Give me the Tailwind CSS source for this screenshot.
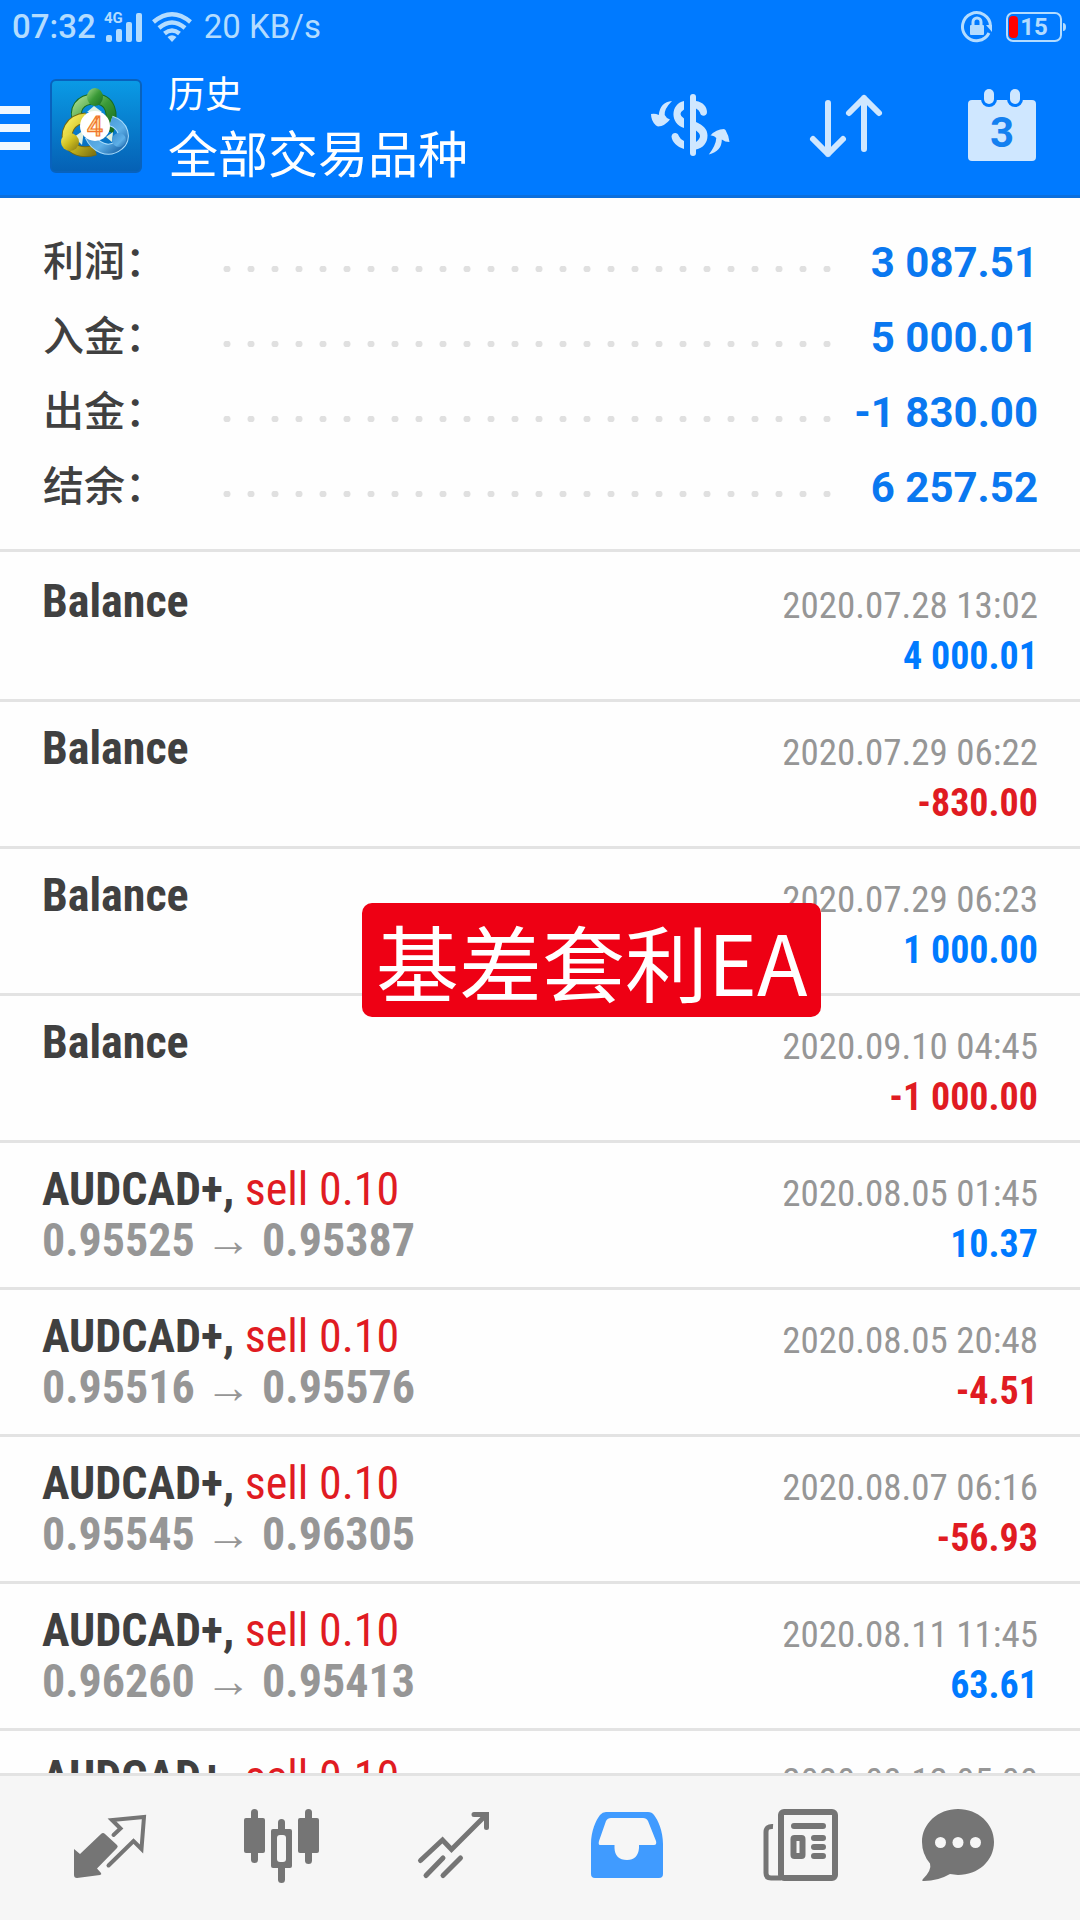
<!DOCTYPE html>
<html lang="zh-CN">
  <head>
    <meta charset="UTF-8">
    <meta name="viewport" content="width=device-width, initial-scale=1.0">
    <title>历史 - 全部交易品种</title>
    <script src="https://cdn.jsdelivr.net/npm/@tailwindcss/browser@4"></script>
  </head>

  <body class="relative h-screen flex flex-col overflow-hidden bg-[#fefefe] text-[#404040] font-['Roboto','Noto_Sans_CJK_SC',sans-serif]">

    <!-- status bar -->
    <div class="h-[53px] shrink-0 bg-[#007aff] text-[#b3dcff] flex items-center pl-3 pr-[14px] pt-1 pb-1 text-[33px] leading-10">
      <span class="font-medium">07:32</span>
      <svg class="ml-2 w-10 h-8" viewBox="0 0 40 32" fill="currentColor" aria-label="4G">
        <text x="0" y="12" font-family="Roboto, sans-serif" font-size="15" font-weight="700">4G</text>
        <rect x="2" y="24" width="6" height="7" rx="2"/>
        <rect x="12" y="18" width="6" height="13" rx="2"/>
        <rect x="22" y="11" width="6" height="20" rx="2"/>
        <rect x="32" y="2" width="6" height="29" rx="2"/>
      </svg>
      <svg class="ml-2 w-10 h-8" viewBox="0 0 40 32" fill="none" stroke="currentColor" stroke-width="4.500" aria-label="Wi-Fi">
        <path d="M1.500 11 Q20 -4.500 38.500 11"/>
        <path d="M7 17 Q20 6 33 17"/>
        <path d="M12.500 22.500 Q20 16.500 27.500 22.500"/>
        <path d="M15.500 26 Q20 22.500 24.500 26 L20 31Z" fill="currentColor" stroke="none"/>
      </svg>
      <span class="ml-3">20 KB/s</span>
      <svg class="ml-auto w-8 h-8" viewBox="0 0 32 32" fill="none" stroke="currentColor" stroke-width="3" aria-label="Rotation lock">
        <path d="M29.500 15 A14 14 0 1 0 28 22"/>
        <path d="M25 14 L31 14 L31 21Z" fill="currentColor" stroke="none"/>
        <rect x="9" y="14" width="14" height="10" rx="1" fill="currentColor" stroke="none"/>
        <path d="M12 15 V11 a4 4 0 0 1 8 0 V15"/>
      </svg>
      <svg class="ml-3 w-[61px] h-8" viewBox="0 0 61 32" fill="none" aria-label="15%">
        <rect x="2" y="2" width="54" height="28" rx="6" stroke="currentColor" stroke-width="2"/>
        <rect x="4" y="5" width="9" height="22" rx="4" fill="#f00"/>
        <path d="M58 12 Q61 12 61 16 Q61 20 58 20Z" fill="currentColor"/>
        <text x="29" y="24" text-anchor="middle" font-family="Roboto, sans-serif" font-size="24" font-weight="700" fill="currentColor">15</text>
      </svg>
    </div>

    <!-- app bar -->
    <header class="h-[145px] shrink-0 bg-[#007aff] border-b-3 border-[#0b6fdd] flex items-center text-white">
      <button type="button" aria-label="Menu" class="w-[30px] flex flex-col gap-[10px] pt-2">
        <span class="w-full h-2 bg-[#f0f8ff]"></span>
        <span class="w-full h-2 bg-[#f0f8ff]"></span>
        <span class="w-full h-2 bg-[#f0f8ff]"></span>
      </button>
      <svg class="ml-5 mt-1 w-[92px] h-[94px]" viewBox="0 0 92 94" aria-label="MetaTrader 4">
        <defs>
          <linearGradient id="tile" x1="0" y1="0" x2="0" y2="1"><stop offset="0" stop-color="#0a9be6"/><stop offset="1" stop-color="#0560b4"/></linearGradient>
          <linearGradient id="green" x1="0" y1="0" x2="1" y2="1"><stop offset="0" stop-color="#a2d98b"/><stop offset=".5" stop-color="#3a9a37"/><stop offset="1" stop-color="#176b20"/></linearGradient>
          <linearGradient id="yellow" x1="0" y1="0" x2="1" y2="1"><stop offset="0" stop-color="#f7ef62"/><stop offset=".5" stop-color="#cdbd1f"/><stop offset="1" stop-color="#847713"/></linearGradient>
          <linearGradient id="blue" x1="0" y1="0" x2="1" y2="1"><stop offset="0" stop-color="#3d8ed0"/><stop offset=".6" stop-color="#5eb0e8"/><stop offset="1" stop-color="#1c67ab"/></linearGradient>
        </defs>
        <rect x="1" y="1" width="90" height="92" rx="5" fill="url(#tile)" stroke="#0862bd" stroke-width="2"/>
        <!-- three linked figures -->
        <path d="M29 45 C22 30 30 20 45 20 C60 20 65 34 58 52" fill="none" stroke="#176b20" stroke-width="11"/>
        <path d="M29 45 C22 30 30 20 45 20 C60 20 65 34 58 52" fill="none" stroke="url(#green)" stroke-width="9"/>
        <path d="M36 39 C20 40 13 54 20 66 C26 73 36 74 45 71" fill="none" stroke="#756a12" stroke-width="11"/>
        <path d="M36 39 C20 40 13 54 20 66 C26 73 36 74 45 71" fill="none" stroke="url(#yellow)" stroke-width="9"/>
        <path d="M61 42 C74 46 77 60 69 66 C58 75 45 68 40 57" fill="none" stroke="#a9dcfb" stroke-width="11"/>
        <path d="M61 42 C74 46 77 60 69 66 C58 75 45 68 40 57" fill="none" stroke="url(#blue)" stroke-width="9"/>
        <path d="M24 58 L34 51 L32 66Z M56 58 L63 53 L62 63Z M37 33 L44 27 L52 33Z" fill="#dff0e0"/>
        <ellipse cx="45" cy="18" rx="8" ry="9" fill="url(#green)"/>
        <circle cx="20" cy="63" r="9" fill="url(#yellow)"/>
        <circle cx="69" cy="61" r="7" fill="url(#blue)"/>
        <circle cx="45" cy="47" r="15" fill="#fff"/>
        <text x="45" y="57" text-anchor="middle" font-family="Roboto, sans-serif" font-size="28" font-weight="500" fill="#ffd9a0" stroke="#f0762b" stroke-width="1.200">4</text>
      </svg>
      <div class="ml-[26px] pt-4">
        <p class="text-[37px] leading-[48px]">历史</p>
        <h1 class="text-[50px] leading-[72px]">全部交易品种</h1>
      </div>

      <div class="ml-auto flex text-[#cfe7ff]">
        <button type="button" aria-label="品种" class="w-[156px] flex justify-center">
          <svg class="w-20 h-20" viewBox="0 0 80 80" fill="currentColor">
            <rect x="40" y="10" width="6" height="62" rx="3"/>
            <path d="M34 17 C20 20 20 40 34 44 V34.500 Q27 30 34 25.500Z"/>
            <path d="M21.500 52.500 C22 48 28 48 28.800 52 Q30 55 34 57 V65 C27 63 22 58 21.500 52.500Z"/>
            <path d="M46 17 C53 18 57 23 57 28 C57 33 50.500 33 50 28.500 Q49 26 46 24.500Z"/>
            <path d="M46 38 C53 41 57.500 45 57.500 51.500 C57.500 59 53 64 46 65.500 V58 Q54 52 46 46.500Z"/>
            <path d="M22 17 Q14 25 14.700 31 Q16 34 20 35.500 Q15 42 8 42.500 L6 41.500 Q1 37 1 30 Q5 29 8.800 31 Q10 18 22 17Z"/>
            <path d="M58.800 70.600 Q66 61 66.300 54 Q64 51 60.500 51.500 Q66 45 74 45 L75.500 46 Q79 52 79.500 58 Q75 58 71.800 55.500 Q72 67 58.800 70.600Z"/>
          </svg>
        </button>
        <button type="button" aria-label="排序" class="w-[156px] flex justify-center">
          <svg class="w-20 h-20" viewBox="0 0 80 80" fill="none" stroke="currentColor" stroke-width="6" stroke-linecap="round" stroke-linejoin="round">
            <path d="M22 19 V70 M7 55 L22 70 L37 55"/>
            <path d="M58 65 V14 M43 29 L58 14 L73 29"/>
          </svg>
        </button>
        <button type="button" aria-label="日期" class="w-[156px] flex justify-center">
          <svg class="w-20 h-20" viewBox="0 0 80 80">
            <rect x="6" y="16" width="68" height="61" rx="4" fill="currentColor"/>
            <rect x="19" y="3" width="16" height="20" rx="8" fill="#007aff"/>
            <rect x="45" y="3" width="16" height="20" rx="8" fill="#007aff"/>
            <rect x="22" y="5" width="10" height="15" rx="5" fill="currentColor"/>
            <rect x="48" y="5" width="10" height="15" rx="5" fill="currentColor"/>
            <text x="40" y="63" text-anchor="middle" font-family="Roboto, sans-serif" font-size="42" font-weight="700" fill="#1480f0">3</text>
          </svg>
        </button>
      </div>
    </header>

    <!-- summary -->
    <dl class="shrink-0 pt-[27px] pb-6 pl-[43px] pr-[42px] border-b-3 border-[#e3e3e3] text-[42px] leading-[75px]">
      <div class="flex items-center">
        <dt class="w-[172px] text-[41px] font-medium">利润：</dt>
        <dd class="flex-1 h-[6px] mt-3 bg-[radial-gradient(circle,#e0e0e0_3px,transparent_4px)] bg-[length:24px_6px]"></dd>
        <dd class="w-[199px] text-right font-bold text-[#0a78f0]">3 087.51</dd>
      </div>
      <div class="flex items-center">
        <dt class="w-[172px] text-[41px] font-medium">入金：</dt>
        <dd class="flex-1 h-[6px] mt-3 bg-[radial-gradient(circle,#e0e0e0_3px,transparent_4px)] bg-[length:24px_6px]"></dd>
        <dd class="w-[199px] text-right font-bold text-[#0a78f0]">5 000.01</dd>
      </div>
      <div class="flex items-center">
        <dt class="w-[172px] text-[41px] font-medium">出金：</dt>
        <dd class="flex-1 h-[6px] mt-3 bg-[radial-gradient(circle,#e0e0e0_3px,transparent_4px)] bg-[length:24px_6px]"></dd>
        <dd class="w-[199px] text-right font-bold text-[#0a78f0]">-1 830.00</dd>
      </div>
      <div class="flex items-center">
        <dt class="w-[172px] text-[41px] font-medium">结余：</dt>
        <dd class="flex-1 h-[6px] mt-3 bg-[radial-gradient(circle,#e0e0e0_3px,transparent_4px)] bg-[length:24px_6px]"></dd>
        <dd class="w-[199px] text-right font-bold text-[#0a78f0]">6 257.52</dd>
      </div>
    </dl>

    <!-- history -->
    <ul class="flex-1 min-h-0 overflow-hidden pt-[3px] font-['Roboto_Condensed','Liberation_Sans_Narrow',sans-serif] text-[46px] leading-[51px]">
      <li class="h-[147px] border-b-3 border-[#e3e3e3] pt-[21px] px-[42px] flex justify-between">
        <div>
          <p class="font-bold">Balance</p>
        </div>
        <div class="text-right text-[38px] leading-[51px] pt-1">
          <p class="text-[37px] text-[#969696]">2020.07.28 13:02</p>
          <p class="font-bold text-[#007aff]">4 000.01</p>
        </div>
      </li>
      <li class="h-[147px] border-b-3 border-[#e3e3e3] pt-[21px] px-[42px] flex justify-between">
        <div>
          <p class="font-bold">Balance</p>
        </div>
        <div class="text-right text-[38px] leading-[51px] pt-1">
          <p class="text-[37px] text-[#969696]">2020.07.29 06:22</p>
          <p class="font-bold text-[#e01b22]">-830.00</p>
        </div>
      </li>
      <li class="h-[147px] border-b-3 border-[#e3e3e3] pt-[21px] px-[42px] flex justify-between">
        <div>
          <p class="font-bold">Balance</p>
        </div>
        <div class="text-right text-[38px] leading-[51px] pt-1">
          <p class="text-[37px] text-[#969696]">2020.07.29 06:23</p>
          <p class="font-bold text-[#007aff]">1 000.00</p>
        </div>
      </li>
      <li class="h-[147px] border-b-3 border-[#e3e3e3] pt-[21px] px-[42px] flex justify-between">
        <div>
          <p class="font-bold">Balance</p>
        </div>
        <div class="text-right text-[38px] leading-[51px] pt-1">
          <p class="text-[37px] text-[#969696]">2020.09.10 04:45</p>
          <p class="font-bold text-[#e01b22]">-1 000.00</p>
        </div>
      </li>
      <li class="h-[147px] border-b-3 border-[#e3e3e3] pt-[21px] px-[42px] flex justify-between">
        <div>
          <p class="font-bold">AUDCAD+, <span class="font-normal text-[#e01b22]">sell 0.10</span></p>
          <p class="font-bold text-[#969696]">0.95525 → 0.95387</p>
        </div>
        <div class="text-right text-[38px] leading-[51px] pt-1">
          <p class="text-[37px] text-[#969696]">2020.08.05 01:45</p>
          <p class="font-bold text-[#007aff]">10.37</p>
        </div>
      </li>
      <li class="h-[147px] border-b-3 border-[#e3e3e3] pt-[21px] px-[42px] flex justify-between">
        <div>
          <p class="font-bold">AUDCAD+, <span class="font-normal text-[#e01b22]">sell 0.10</span></p>
          <p class="font-bold text-[#969696]">0.95516 → 0.95576</p>
        </div>
        <div class="text-right text-[38px] leading-[51px] pt-1">
          <p class="text-[37px] text-[#969696]">2020.08.05 20:48</p>
          <p class="font-bold text-[#e01b22]">-4.51</p>
        </div>
      </li>
      <li class="h-[147px] border-b-3 border-[#e3e3e3] pt-[21px] px-[42px] flex justify-between">
        <div>
          <p class="font-bold">AUDCAD+, <span class="font-normal text-[#e01b22]">sell 0.10</span></p>
          <p class="font-bold text-[#969696]">0.95545 → 0.96305</p>
        </div>
        <div class="text-right text-[38px] leading-[51px] pt-1">
          <p class="text-[37px] text-[#969696]">2020.08.07 06:16</p>
          <p class="font-bold text-[#e01b22]">-56.93</p>
        </div>
      </li>
      <li class="h-[147px] border-b-3 border-[#e3e3e3] pt-[21px] px-[42px] flex justify-between">
        <div>
          <p class="font-bold">AUDCAD+, <span class="font-normal text-[#e01b22]">sell 0.10</span></p>
          <p class="font-bold text-[#969696]">0.96260 → 0.95413</p>
        </div>
        <div class="text-right text-[38px] leading-[51px] pt-1">
          <p class="text-[37px] text-[#969696]">2020.08.11 11:45</p>
          <p class="font-bold text-[#007aff]">63.61</p>
        </div>
      </li>
      <li class="h-[147px] pt-[21px] px-[42px] flex justify-between">
        <p class="font-bold">AUDCAD+, <span class="font-normal text-[#e01b22]">sell 0.10</span></p>
        <p class="text-right text-[37px] leading-[51px] pt-1 text-[#969696]">2020.08.12 05:00</p>
      </li>
    </ul>

    <!-- caption over the list -->
    <div class="absolute left-[362px] top-[903px] h-[114px] px-[14px] rounded-[10px] bg-[#ee0014] text-white text-[83px] leading-[114px] whitespace-nowrap font-['Noto_Sans_CJK_SC',sans-serif]">基差套利EA</div>

    <!-- tabs -->
    <nav class="h-[147px] shrink-0 bg-[#f6f6f6] border-t-3 border-[#e3e3e3] px-6 grid grid-cols-6 items-center justify-items-center text-[#757575]">
      <a href="#quotes" aria-label="行情">
        <svg class="w-20 h-20" viewBox="0 0 80 80">
          <path d="M4 41 L10 46 L31 26 Q33 24 35 26 L47 37 Q48.500 38.500 47 40 L27 60.500 L31 65 Q32 66.500 30 67 L7 70 Q4 70 4 67Z" fill="currentColor"/>
          <path d="M43.500 27 L50.500 20.500 L42 12 L74 9 L71.500 41 L63.500 33 L38.500 57.500" fill="none" stroke="currentColor" stroke-width="4" stroke-linecap="round"/>
        </svg>
      </a>
      <a href="#charts" aria-label="图表">
        <svg class="w-20 h-20" viewBox="0 0 80 80" fill="currentColor">
          <rect x="9" y="1" width="7" height="54" rx="3.500"/>
          <rect x="2" y="10" width="21" height="35" rx="2"/>
          <rect x="36" y="11" width="7" height="64" rx="3.500"/>
          <rect x="29" y="21" width="21" height="39" rx="2"/>
          <rect x="35" y="27" width="9" height="27" rx="3" fill="#f6f6f6"/>
          <rect x="63" y="1" width="7" height="55" rx="3.500"/>
          <rect x="56" y="10" width="21" height="35" rx="2"/>
        </svg>
      </a>
      <a href="#trade" aria-label="交易">
        <svg class="w-20 h-20" viewBox="0 0 80 80" fill="none" stroke="currentColor" stroke-width="5" stroke-linecap="round">
          <path d="M6.500 52.500 L28.500 32 L37.500 41.500 L72 7"/>
          <path d="M60 6.500 H72.500 V19.500"/>
          <path d="M12 67.500 L29 50 M29 67.500 L46.500 50"/>
        </svg>
      </a>
      <a href="#history" aria-label="历史" class="text-[#409bff]">
        <svg class="w-20 h-20" viewBox="0 0 80 80" fill="currentColor">
          <path d="M5 36 C5 23 10 12 14 7 Q16.500 4 20 4 H62 Q66 4 68 7 C72 12 77 23 77 36 V66 Q77 70 73 70 H9 Q5 70 5 66Z"/>
          <path d="M25 10 H57 Q60.500 10 62 13 L70 33 Q71 37 68 37 H53 V40 Q52 52 41 52 Q29 52 28.500 40 V37 H14 Q12 37 13 33 L20 13 Q21.500 10 25 10Z" fill="#f6f6f6"/>
        </svg>
      </a>
      <a href="#news" aria-label="新闻">
        <svg class="w-20 h-20" viewBox="0 0 80 80" fill="none" stroke="currentColor" stroke-width="6">
          <rect x="23" y="4" width="54" height="66" rx="3"/>
          <path d="M15 18.500 Q8 18 8 24 V65 Q8 70 13 70 H23" stroke-width="5"/>
          <path d="M36 18 H65 M56 30 H65 M56 39 H65 M56 48 H65" stroke-linecap="round"/>
          <rect x="35.500" y="30" width="9" height="18" rx="1"/>
        </svg>
      </a>
      <a href="#messages" aria-label="消息">
        <svg class="w-[104px] h-20" viewBox="0 0 104 80" fill="currentColor">
          <path d="M40 1 C60 1 76 15.500 76 34 C76 53 60 67 40 67 L32 66 Q20 73 6 73 Q3 73 5 71 Q14 62 12 55.500 Q4 46 4 34 C4 15.500 20 1 40 1Z"/>
          <circle cx="22.500" cy="34.500" r="5.500" fill="#f6f6f6"/>
          <circle cx="40" cy="34.500" r="5.500" fill="#f6f6f6"/>
          <circle cx="57.500" cy="34.500" r="5.500" fill="#f6f6f6"/>
        </svg>
      </a>
    </nav>
  </body>
</html>
